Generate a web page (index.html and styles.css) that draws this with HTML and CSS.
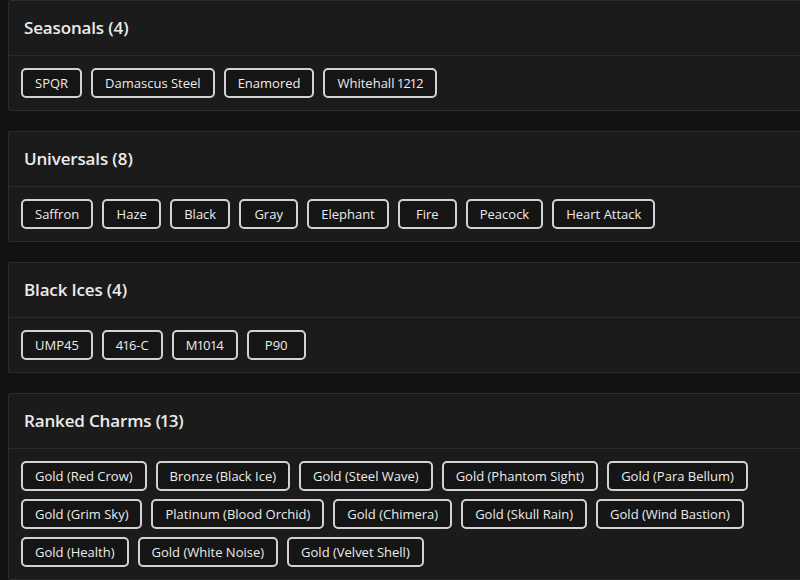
FILE: index.html
```html
<!DOCTYPE html>
<html lang="en">
<head>
<meta charset="utf-8">
<title>Collections</title>
<link rel="stylesheet" href="styles.css">
</head>
<body>
<main class="list">
  <section class="card">
    <header class="card-head"><h2 class="card-title">Seasonals (4)</h2></header>
    <div class="card-body">
      <span class="chip">SPQR</span>
      <span class="chip">Damascus Steel</span>
      <span class="chip">Enamored</span>
      <span class="chip">Whitehall 1212</span>
    </div>
  </section>
  <section class="card">
    <header class="card-head"><h2 class="card-title">Universals (8)</h2></header>
    <div class="card-body">
      <span class="chip">Saffron</span>
      <span class="chip">Haze</span>
      <span class="chip">Black</span>
      <span class="chip">Gray</span>
      <span class="chip">Elephant</span>
      <span class="chip">Fire</span>
      <span class="chip">Peacock</span>
      <span class="chip">Heart Attack</span>
    </div>
  </section>
  <section class="card">
    <header class="card-head"><h2 class="card-title">Black Ices (4)</h2></header>
    <div class="card-body">
      <span class="chip">UMP45</span>
      <span class="chip">416-C</span>
      <span class="chip">M1014</span>
      <span class="chip">P90</span>
    </div>
  </section>
  <section class="card">
    <header class="card-head"><h2 class="card-title">Ranked Charms (13)</h2></header>
    <div class="card-body">
      <span class="chip">Gold (Red Crow)</span>
      <span class="chip">Bronze (Black Ice)</span>
      <span class="chip">Gold (Steel Wave)</span>
      <span class="chip">Gold (Phantom Sight)</span>
      <span class="chip">Gold (Para Bellum)</span>
      <span class="chip">Gold (Grim Sky)</span>
      <span class="chip">Platinum (Blood Orchid)</span>
      <span class="chip">Gold (Chimera)</span>
      <span class="chip">Gold (Skull Rain)</span>
      <span class="chip">Gold (Wind Bastion)</span>
      <span class="chip">Gold (Health)</span>
      <span class="chip">Gold (White Noise)</span>
      <span class="chip">Gold (Velvet Shell)</span>
    </div>
  </section>
</main>
</body>
</html>
```
FILE: styles.css
```css
html {
  overflow: hidden;
  background: #121212;
}
body {
  margin: 0;
  padding: 0 0 0 8px;
  background: #121212;
  font-family: "Open Sans", "Liberation Sans", sans-serif;
  color: #e6e6e6;
  font-variant-numeric: proportional-nums;
}
.list {
  display: flex;
  flex-direction: column;
  gap: 20px;
  width: 800px;
}
.card {
  background: #1b1b1b;
  border: 1px solid #2c2c2c;
  border-radius: 2px;
}
.card-head {
  padding: 16px 15px;
  border-bottom: 1px solid #2c2c2c;
}
.card-title {
  margin: 0;
  font-size: 17px;
  line-height: 22px;
  font-weight: 600;
  letter-spacing: -0.15px;
  color: #ececec;
}
.card-body {
  display: flex;
  flex-wrap: wrap;
  gap: 8px 9px;
  padding: 12px;
  width: 775px;
}
.chip {
  box-sizing: border-box;
  height: 30px;
  min-width: 59px;
  padding: 0 12px;
  display: inline-flex;
  align-items: center;
  justify-content: center;
  border: 2px solid #d2d2d2;
  border-radius: 5px;
  background: #151515;
  color: #ececec;
  font-size: 13px;
  white-space: nowrap;
}
```
